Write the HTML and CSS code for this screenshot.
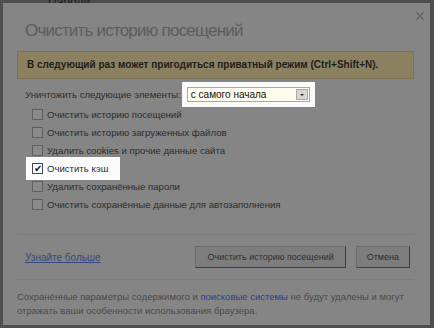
FILE: index.html
```html
<!DOCTYPE html>
<html lang="ru">
<head>
<meta charset="utf-8">
<title>Очистить историю посещений</title>
<link rel="stylesheet" href="styles.css">
</head>
<body>
<div class="behind"><span class="behind-text">Пароли</span></div>
<div class="dialog">
  <span class="close">×</span>
  <h1 class="title">Очистить историю посещений</h1>
  <div class="notice">В следующий раз может пригодиться приватный режим (Ctrl+Shift+N).</div>
  <div class="range">
    <span>Уничтожить следующие элементы:</span>
    <div class="select spot"><span class="select-text">с самого начала</span><span class="arrow"></span></div>
  </div>
  <ul class="items">
    <li class="item"><span class="box"></span>Очистить историю посещений</li>
    <li class="item"><span class="box"></span>Очистить историю загруженных файлов</li>
    <li class="item"><span class="box"></span>Удалить cookies и прочие данные сайта</li>
    <li class="item"><span class="spot spot-row"><span class="box checked">✔</span>Очистить кэш</span></li>
    <li class="item"><span class="box"></span>Удалить сохранённые пароли</li>
    <li class="item"><span class="box"></span>Очистить сохранённые данные для автозаполнения</li>
  </ul>
  <div class="actions">
    <a class="more" href="#">Узнайте больше</a>
    <span class="btn btn-main">Очистить историю посещений</span>
    <span class="btn">Отмена</span>
  </div>
  <p class="footer">Сохранённые параметры содержимого и <a href="#">поисковые системы</a> не будут удалены и могут<br>отражать ваши особенности использования браузера.</p>
</div>
</body>
</html>
```

FILE: styles.css
```css
html, body {
  margin: 0;
  padding: 0;
}
body {
  width: 434px;
  height: 328px;
  overflow: hidden;
  background: #4e4e4e;
  font-family: "Liberation Sans", Arial, sans-serif;
}
.behind {
  height: 3px;
  overflow: hidden;
  padding-left: 48px;
  font-size: 12px;
  line-height: 4px;
  color: #1e1e1e;
}
.dialog {
  position: relative;
  box-sizing: border-box;
  margin: 0 4px 0 3px;
  height: 322px;
  background: #858585;
  padding: 0 16px 0 14px;
}
.close {
  position: absolute;
  right: 4px;
  top: 4px;
  font-size: 15px;
  color: #666;
  font-family: "DejaVu Sans", sans-serif;
}
.title {
  margin: 0;
  padding: 19px 0 0 8px;
  height: 37px;
  box-sizing: border-box;
  font-family: "Liberation Sans", sans-serif;
  font-weight: normal;
  font-size: 17px;
  letter-spacing: -0.8px;
  line-height: 18px;
  color: #5c5c5c;
}
.notice {
  margin-top: 11px;
  height: 28px;
  box-sizing: border-box;
  background: #8b8160;
  border: 1px solid #7b7355;
  padding: 0 0 0 9px;
  font-weight: bold;
  font-size: 10px;
  line-height: 26px;
  color: #1d1d1d;
}
.range {
  display: flex;
  align-items: center;
  margin-top: 7px;
  padding-left: 8px;
  height: 16px;
  font-size: 9.6px;
  color: #2c2c2c;
}
.select {
  margin-left: 6px;
  width: 123px;
  height: 15px;
  box-sizing: border-box;
  border: 1px solid #b9a679;
  background: #fffcee;
  display: flex;
  align-items: center;
  justify-content: space-between;
  padding-left: 3px;
  font-size: 10px;
  color: #111;
}
.spot {
  box-shadow: 0 0 0 5px #fbfbfb;
}
.arrow {
  width: 12px;
  height: 11px;
  margin-right: 1px;
  background: #d6d6d6;
  border: 1px solid #aaa;
  box-sizing: border-box;
  position: relative;
}
.arrow::after {
  content: "";
  position: absolute;
  left: 3px;
  top: 4px;
  border-left: 2px solid transparent;
  border-right: 2px solid transparent;
  border-top: 2px solid #222;
}
.items {
  list-style: none;
  margin: 3px 0 0;
  padding: 0 0 0 15px;
}
.item {
  height: 18px;
  display: flex;
  align-items: center;
  font-size: 9.6px;
  color: #2c2c2c;
}
.box {
  width: 11px;
  height: 11px;
  box-sizing: border-box;
  border: 1px solid #5f5f5f;
  background: #8a8a8a;
  margin-right: 4px;
  flex: none;
}
.spot-row {
  display: inline-flex;
  align-items: center;
  background: #fbfbfb;
  padding-right: 6px;
  box-shadow: 0 0 0 6px #fbfbfb;
}
.box.checked {
  background: #fff;
  border-color: #444;
  font-size: 10px;
  line-height: 9px;
  text-align: center;
  color: #111;
}
.actions {
  margin-top: 21px;
  border-top: 1px solid #7c7c7c;
  border-bottom: 1px solid #7c7c7c;
  height: 44px;
  display: flex;
  align-items: center;
  padding-left: 8px;
  padding-right: 4px;
  gap: 10px;
}
.more {
  flex: 1;
  font-size: 10px;
  color: #35477e;
}
.btn {
  height: 22px;
  box-sizing: border-box;
  padding: 0 10px;
  background: #7d7d7d;
  border: 1px solid #6d6d6d;
  border-right-color: #3e3e3e;
  border-bottom-color: #3e3e3e;
  font-size: 9px;
  line-height: 20px;
  color: #2e2e2e;
}
.btn-main {
  padding: 0 11px;
}
.footer {
  margin: 10px 0 0;
  font-size: 9.5px;
  line-height: 14px;
  color: #4a4a4a;
  white-space: nowrap;
}
.footer a {
  color: #2f3f88;
  text-decoration: none;
}
```
